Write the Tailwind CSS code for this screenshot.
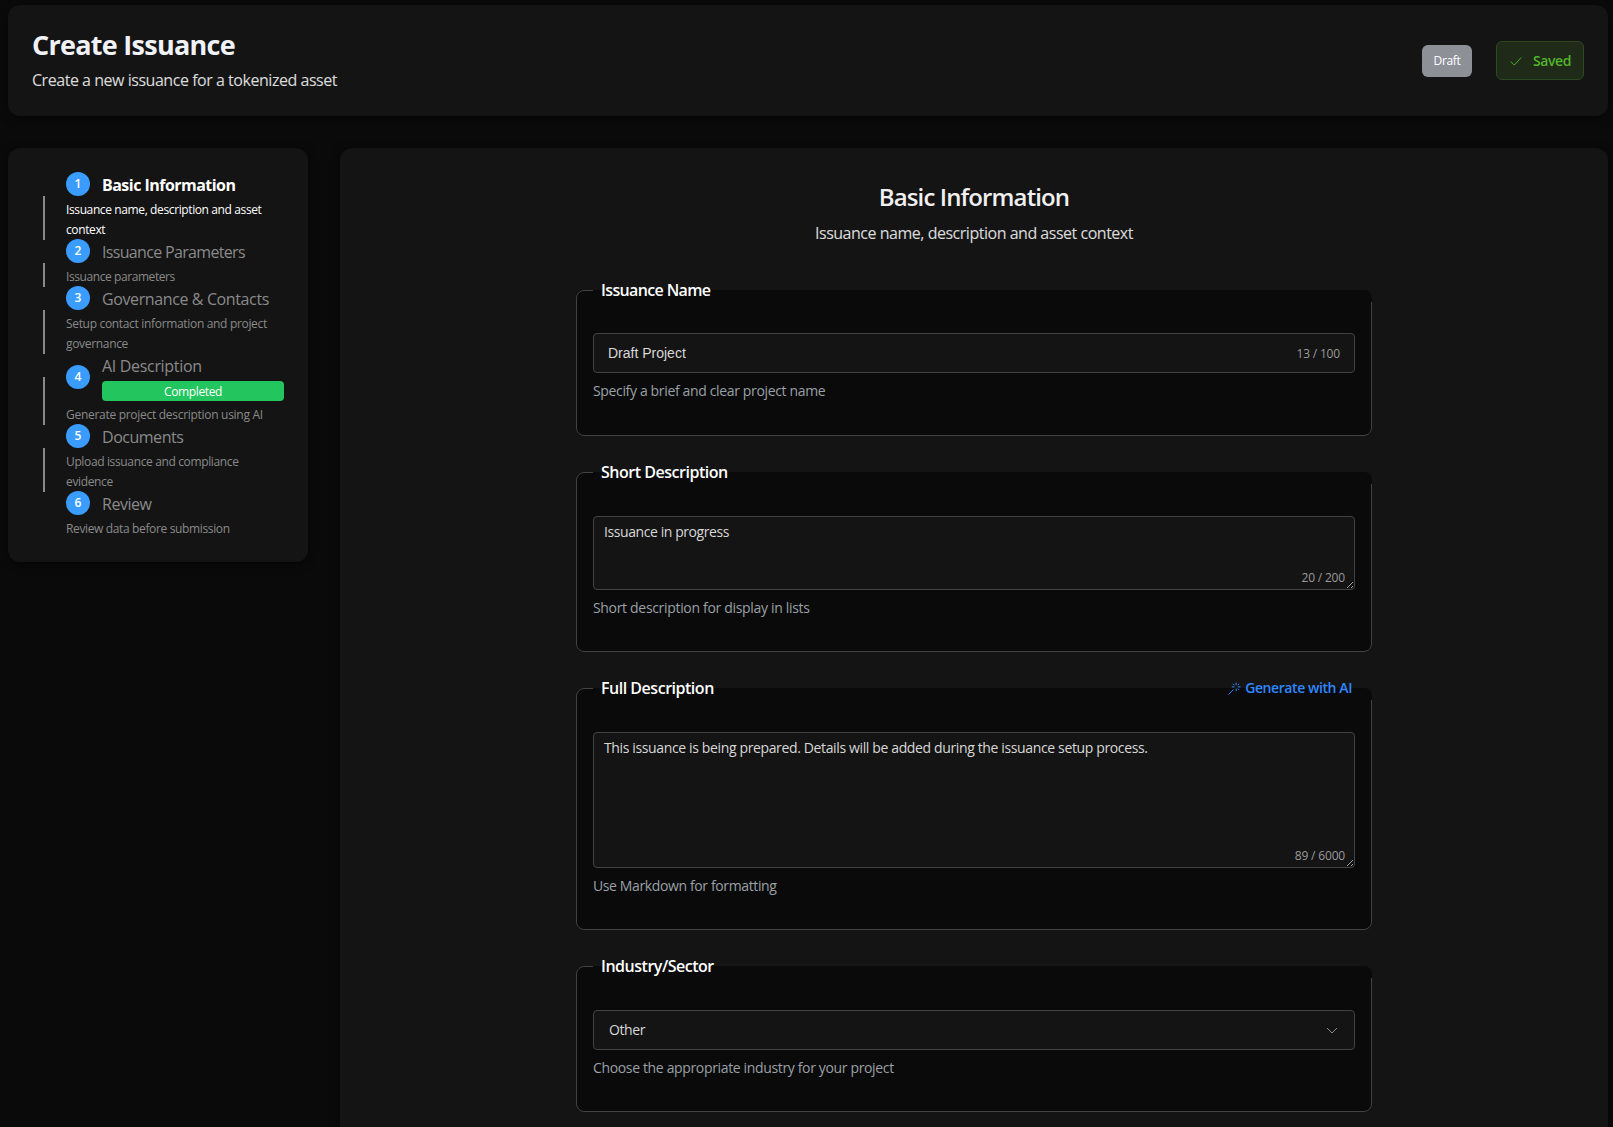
<!DOCTYPE html>
<html lang="en">
<head>
<meta charset="utf-8">
<title>Create Issuance</title>
<script src="https://cdn.jsdelivr.net/npm/@tailwindcss/browser@4"></script>
</head>
<body class="bg-[#0a0a0a]">
<div class="h-[1127px] overflow-hidden pl-2 pr-[5px] pt-[5px] font-['Open_Sans','Noto_Sans',sans-serif] text-white">
  <header class="flex h-[111px] items-center justify-between rounded-xl bg-[#141414] pl-6 pr-6 shadow-[0_2px_10px_rgba(0,0,0,0.5)]">
    <div class="pb-[2px]">
      <h1 class="text-[27px] leading-[34px] font-bold tracking-[-0.027em] text-[#f0f2f8]">Create Issuance</h1>
      <p class="mt-[6px] text-[16px] leading-[24px] tracking-[-0.029em] text-white/85">Create a new issuance for a tokenized asset</p>
    </div>
    <div class="flex items-center gap-6">
      <span class="flex h-8 w-[50px] items-center justify-center rounded-md bg-[#8e9098] text-[12px] tracking-[-0.03em]">Draft</span>
      <span class="flex h-[39px] w-[88px] items-center justify-center gap-[10px] rounded-md border border-[#2d4a1f] bg-[#1f2a18] text-[14px] font-semibold tracking-[-0.03em] text-[#52b52a]">
        <svg class="h-[14px] w-[14px]" viewBox="0 0 24 24" fill="none" stroke="currentColor" stroke-width="1.6"><path d="M3 13l6 6L21 6"/></svg>
        Saved
      </span>
    </div>
  </header>

  <div class="mt-8 flex items-start gap-8">
    <aside class="w-[300px] shrink-0 rounded-xl bg-[#141414] pb-6 pl-[58px] pr-6 pt-6 shadow-[0_2px_10px_rgba(0,0,0,0.5)]">
      <ol>
        <li class="relative">
          <span class="absolute -left-[23px] top-6 bottom-0 w-[2px] bg-[#8a8a8a]"></span>
          <div class="flex h-6 items-center gap-3">
            <span class="flex h-6 w-6 shrink-0 items-center justify-center rounded-full bg-[#3b9cff] text-[12px] font-semibold">1</span>
            <span class="pt-px text-[16px] font-bold tracking-[-0.033em]">Basic Information</span>
          </div>
          <p class="-mb-px pt-1 text-[12px] leading-5 tracking-[-0.032em]">Issuance name, description and asset context</p>
        </li>
        <li class="relative">
          <span class="absolute -left-[23px] top-6 bottom-0 w-[2px] bg-[#8a8a8a]"></span>
          <div class="flex h-6 items-center gap-3">
            <span class="flex h-6 w-6 shrink-0 items-center justify-center rounded-full bg-[#3b9cff] text-[12px] font-semibold">2</span>
            <span class="pt-px text-[16px] tracking-[-0.042em] text-[#8a8a8a]">Issuance Parameters</span>
          </div>
          <p class="-mb-px pt-1 text-[12px] leading-5 tracking-[-0.035em] text-[#8a8a8a]">Issuance parameters</p>
        </li>
        <li class="relative">
          <span class="absolute -left-[23px] top-6 bottom-0 w-[2px] bg-[#8a8a8a]"></span>
          <div class="flex h-6 items-center gap-3">
            <span class="flex h-6 w-6 shrink-0 items-center justify-center rounded-full bg-[#3b9cff] text-[12px] font-semibold">3</span>
            <span class="pt-px text-[16px] tracking-[-0.024em] text-[#8a8a8a]">Governance &amp; Contacts</span>
          </div>
          <p class="-mb-px pt-1 text-[12px] leading-5 tracking-[-0.027em] text-[#8a8a8a]">Setup contact information and project governance</p>
        </li>
        <li class="relative">
          <span class="absolute -left-[23px] top-6 bottom-0 w-[2px] bg-[#8a8a8a]"></span>
          <div class="flex h-12 items-center gap-3">
            <span class="flex h-6 w-6 shrink-0 items-center justify-center rounded-full bg-[#3b9cff] text-[12px] font-semibold">4</span>
            <div class="flex-1">
              <div class="h-7 pt-px text-[16px] leading-[24px] tracking-[-0.02em] text-[#8a8a8a]">AI Description</div>
              <div class="flex h-5 items-center justify-center rounded-[4px] bg-[#22c55e] pt-px text-[12px] tracking-[-0.03em]">Completed</div>
            </div>
          </div>
          <p class="-mb-px pt-1 text-[12px] leading-5 tracking-[-0.024em] text-[#8a8a8a]">Generate project description using AI</p>
        </li>
        <li class="relative">
          <span class="absolute -left-[23px] top-6 bottom-0 w-[2px] bg-[#8a8a8a]"></span>
          <div class="flex h-6 items-center gap-3">
            <span class="flex h-6 w-6 shrink-0 items-center justify-center rounded-full bg-[#3b9cff] text-[12px] font-semibold">5</span>
            <span class="pt-px text-[16px] tracking-[-0.03em] text-[#8a8a8a]">Documents</span>
          </div>
          <p class="-mb-px pt-1 text-[12px] leading-5 tracking-[-0.03em] text-[#8a8a8a]">Upload issuance and compliance evidence</p>
        </li>
        <li>
          <div class="flex h-6 items-center gap-3">
            <span class="flex h-6 w-6 shrink-0 items-center justify-center rounded-full bg-[#3b9cff] text-[12px] font-semibold">6</span>
            <span class="pt-px text-[16px] tracking-[-0.03em] text-[#8a8a8a]">Review</span>
          </div>
          <p class="-mb-px pt-1 text-[12px] leading-5 tracking-[-0.03em] text-[#8a8a8a]">Review data before submission</p>
        </li>
      </ol>
    </aside>

    <main class="min-h-[1000px] flex-1 rounded-t-xl bg-[#141414] pt-8 shadow-[0_2px_10px_rgba(0,0,0,0.5)]">
      <h2 class="text-center text-[24px] leading-[34px] font-semibold tracking-[-0.037em] text-[#f0f0f0]">Basic Information</h2>
      <p class="mt-[7px] text-center text-[16px] leading-6 tracking-[-0.03em] text-white/85">Issuance name, description and asset context</p>

      <div class="mx-auto mt-[33px] flex w-[796px] flex-col gap-6">
        <fieldset class="rounded-lg border border-[#424242] bg-[#0a0a0a] px-4 pb-[34px]">
          <legend class="w-[calc(100%+17px)] px-2 text-[16px] leading-6 font-semibold tracking-[-0.04em]">Issuance Name</legend>
          <div class="relative mt-[31px]">
            <input value="Draft Project" class="h-10 w-full rounded-[4px] border border-[#424242] bg-[#141414] px-[14px] font-['Liberation_Sans',sans-serif] text-[14px] text-[#d8d8d8] outline-none">
            <span class="absolute right-[15px] top-3 text-[12px] leading-[18px] tracking-[-0.015em] text-[#9a9a9a]">13 / 100</span>
          </div>
          <p class="mt-2 text-[14px] leading-5 tracking-[-0.025em] text-[#9aa0a6]">Specify a brief and clear project name</p>
        </fieldset>

        <fieldset class="rounded-lg border border-[#424242] bg-[#0a0a0a] px-4 pb-[33px]">
          <legend class="w-[calc(100%+17px)] px-2 text-[16px] leading-6 font-semibold tracking-[-0.03em]">Short Description</legend>
          <div class="relative mt-8">
            <textarea class="block h-[74px] w-full rounded-[4px] border border-[#424242] bg-[#141414] px-[10px] py-1 text-[14px] leading-[22px] tracking-[-0.03em] text-[#d8d8d8] outline-none">Issuance in progress</textarea>
            <span class="absolute bottom-[3px] right-[10px] text-[12px] leading-[18px] tracking-[-0.015em] text-[#9a9a9a]">20 / 200</span>
          </div>
          <p class="mt-2 text-[14px] leading-5 tracking-[-0.023em] text-[#9aa0a6]">Short description for display in lists</p>
        </fieldset>

        <fieldset class="rounded-lg border border-[#424242] bg-[#0a0a0a] px-4 pb-[33px]">
          <legend class="flex w-[calc(100%+17px)] items-center justify-between pl-2 pr-5 text-[16px] leading-6 font-semibold tracking-[-0.03em]">
            <span>Full Description</span>
            <span class="flex items-center gap-1 text-[14px] font-semibold tracking-[-0.03em] text-[#2f88ff]">
              <svg class="h-[13px] w-[13px]" viewBox="0 0 24 24" fill="none" stroke="currentColor" stroke-width="1.8"><path d="M1 23L10 14M15 1v5M15 12v5M7 9h5M18 9h5M9.3 3.3l2.5 2.5M20.7 3.3l-2.5 2.5M20.7 14.7l-2.5-2.5"/></svg>
              Generate with AI
            </span>
          </legend>
          <div class="relative mt-8">
            <textarea class="block h-[136px] w-full rounded-[4px] border border-[#424242] bg-[#141414] px-[10px] py-1 text-[14px] leading-[22px] tracking-[-0.026em] text-[#d8d8d8] outline-none">This issuance is being prepared. Details will be added during the issuance setup process.</textarea>
            <span class="absolute bottom-[3px] right-[10px] text-[12px] leading-[18px] tracking-[-0.015em] text-[#9a9a9a]">89 / 6000</span>
          </div>
          <p class="mt-2 text-[14px] leading-5 tracking-[-0.027em] text-[#9aa0a6]">Use Markdown for formatting</p>
        </fieldset>

        <fieldset class="rounded-lg border border-[#424242] bg-[#0a0a0a] px-4 pb-[33px]">
          <legend class="w-[calc(100%+17px)] px-2 text-[16px] leading-6 font-semibold tracking-[-0.03em]">Industry/Sector</legend>
          <div class="mt-8 flex h-10 items-center justify-between rounded-[4px] border border-[#424242] bg-[#141414] pb-px pl-[15px] pr-4 text-[14px] tracking-[-0.03em] text-[#d8d8d8]">
            <span>Other</span>
            <svg class="h-3 w-3" viewBox="0 0 12 12" fill="none" stroke="#8a8a8a" stroke-width="1"><path d="M1 4l5 5 5-5"/></svg>
          </div>
          <p class="mt-2 text-[14px] leading-5 tracking-[-0.025em] text-[#9aa0a6]">Choose the appropriate industry for your project</p>
        </fieldset>
      </div>
    </main>
  </div>
</div>
</body>
</html>
